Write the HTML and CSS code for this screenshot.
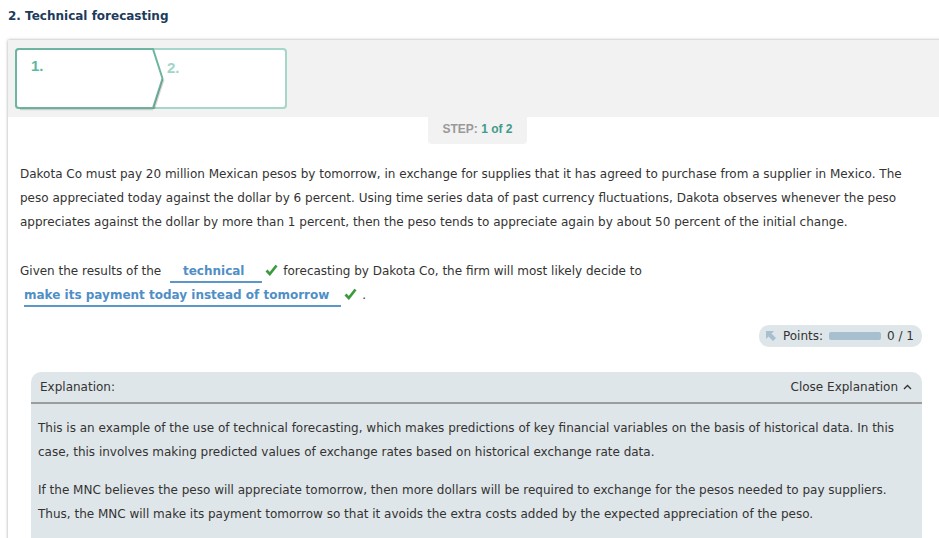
FILE: index.html
```html
<!DOCTYPE html>
<html>
<head>
<meta charset="utf-8">
<link rel="stylesheet" href="styles.css">
</head>
<body>
<h2 class="title">2. Technical forecasting</h2>
<div class="card">
  <div class="card-head">
    <div class="stepper">
      <div class="step step-2"><span class="step-num">2.</span></div>
      <div class="step step-1">
        <svg class="step-shape" width="152" height="64" viewBox="0 0 152 64">
          <path d="M4 1 H138 L147.5 30.5 L138 60 H4 Q1 60 1 57 V4 Q1 1 4 1 Z" fill="#fff" stroke="#6db4a1" stroke-width="2"/>
          <path d="M139 61 L148.5 31.5" stroke="rgba(0,0,0,0.18)" stroke-width="2" fill="none"/>
          <path d="M5 61.5 H138" stroke="rgba(0,0,0,0.15)" stroke-width="1.5"/>
        </svg>
        <span class="step-num">1.</span>
      </div>
    </div>
  </div>
  <div class="step-label"><span class="step-word">STEP:</span> <span class="step-count">1 of 2</span></div>
  <div class="content">
    <p class="text">Dakota Co must pay 20 million Mexican pesos by tomorrow, in exchange for supplies that it has agreed to purchase from a supplier in Mexico. The peso appreciated today against the dollar by 6 percent. Using time series data of past currency fluctuations, Dakota observes whenever the peso appreciates against the dollar by more than 1 percent, then the peso tends to appreciate again by about 50 percent of the initial change.</p>
    <p class="text text-answer">Given the results of the <span class="blank blank-1">technical</span><svg class="check" width="13" height="12" viewBox="0 0 13 12"><path d="M1.5 6.5 L4.8 10 L11.5 1.5" stroke="#3b9a3b" stroke-width="2.7" fill="none" stroke-linejoin="miter"/></svg> forecasting by Dakota Co, the firm will most likely decide to<br><span class="blank blank-2">make its payment today instead of tomorrow</span><svg class="check" width="13" height="12" viewBox="0 0 13 12"><path d="M1.5 6.5 L4.8 10 L11.5 1.5" stroke="#3b9a3b" stroke-width="2.7" fill="none" stroke-linejoin="miter"/></svg> .</p>
    <div class="points-row">
      <div class="points">
        <svg class="points-icon" width="12" height="12" viewBox="0 0 12 12"><path d="M1 1 H9 L6.5 3.5 L11 8 L8 11 L3.5 6.5 L1 9 Z" fill="#a8bfcf"/></svg>
        <span>Points:</span>
        <span class="points-bar"></span>
        <span>0 / 1</span>
      </div>
    </div>
    <div class="explain">
      <div class="explain-head">
        <span>Explanation:</span>
        <span class="explain-close">Close Explanation <svg width="9" height="6" viewBox="0 0 9 6"><path d="M1 5 L4.5 1.5 L8 5" stroke="#333" stroke-width="1.3" fill="none"/></svg></span>
      </div>
      <div class="explain-body">
        <p>This is an example of the use of technical forecasting, which makes predictions of key financial variables on the basis of historical data. In this case, this involves making predicted values of exchange rates based on historical exchange rate data.</p>
        <p>If the MNC believes the peso will appreciate tomorrow, then more dollars will be required to exchange for the pesos needed to pay suppliers. Thus, the MNC will make its payment tomorrow so that it avoids the extra costs added by the expected appreciation of the peso.</p>
      </div>
    </div>
  </div>
</div>
</body>
</html>
```

FILE: styles.css
```css
html, body {
  margin: 0;
  padding: 0;
  overflow: hidden;
  background: #fff;
}
body {
  padding: 8px 0 0 8px;
  font-family: "DejaVu Sans", Verdana, sans-serif;
  color: #333;
}
.title {
  margin: 0 0 15px 0;
  font-family: "DejaVu Sans", Verdana, sans-serif;
  font-size: 12px;
  line-height: 17px;
  font-weight: bold;
  color: #1d3b5b;
}
.card {
  margin-right: -8px;
  background: #fff;
  box-shadow: 0 0 3px rgba(0,0,0,0.35);
  height: 600px;
}
.card-head {
  background: #f2f2f2;
  height: 77px;
  padding: 8px 0 0 7px;
  box-sizing: border-box;
}
.stepper {
  position: relative;
  width: 272px;
  height: 61px;
}
.step-2 {
  width: 272px;
  height: 61px;
  box-sizing: border-box;
  border: 2px solid #a4d6c9;
  border-radius: 4px;
  background: #fff;
  padding: 8px 0 0 150px;
}
.step-1 {
  position: absolute;
  left: 0;
  top: 0;
  width: 152px;
  height: 64px;
}
.step-shape {
  position: absolute;
  left: 0;
  top: 0;
}
.step-1 .step-num {
  position: absolute;
  left: 16px;
  top: 10px;
  color: #5cb7a1;
}
.step-num {
  font-family: "Liberation Sans", Arial, sans-serif;
  font-weight: bold;
  font-size: 15px;
  line-height: 16px;
  color: #a0d6c8;
}
.step-label {
  width: 99px;
  height: 27px;
  margin: 0 auto;
  background: #f2f2f2;
  border-radius: 0 0 4px 4px;
  text-align: center;
  font-family: "Liberation Sans", Arial, sans-serif;
  font-size: 12px;
  font-weight: bold;
  line-height: 25px;
}
.step-word { color: #999; }
.step-count { color: #3f9b8c; }
.content {
  padding: 18px 25px 0 12px;
}
.text {
  margin: 0 0 25px 0;
  font-size: 12px;
  line-height: 24px;
  color: #333;
}
.text-answer {
  margin-bottom: 24px;
}
.blank {
  display: inline-block;
  border-bottom: 2px solid #5b98c9;
  line-height: 19px;
  color: #4f8fc6;
  font-weight: bold;
}
.blank-1 {
  padding: 0 18px 0 13px;
  margin-left: 5px;
}
.blank-2 {
  margin-left: 4px;
  padding: 0 12px 0 0;
}
.check {
  vertical-align: -1px;
  margin: 0 1px 0 3px;
}
.points-row {
  display: flex;
  justify-content: flex-end;
  margin-top: -6px;
}
.points {
  display: flex;
  align-items: center;
  gap: 6px;
  height: 22px;
  padding: 0 8px 0 6px;
  background: #dfe6e9;
  border-radius: 10px;
  font-size: 12px;
  color: #333;
}
.points-bar {
  width: 52px;
  height: 8px;
  border-radius: 2px;
  background: #a8bfcf;
}
.explain {
  margin: 25px 0 0 11px;
  background: #dfe6e9;
  border-radius: 10px;
  height: 200px;
}
.explain-head {
  display: flex;
  justify-content: space-between;
  align-items: center;
  height: 30px;
  padding: 0 10px 0 9px;
  border-bottom: 2px solid #9d9d9d;
  font-size: 12px;
  color: #333;
}
.explain-close {
  display: flex;
  align-items: center;
  gap: 5px;
}
.explain-body {
  padding: 12px 20px 0 7px;
}
.explain-body p {
  margin: 0 0 14px 0;
  font-size: 12px;
  line-height: 24px;
  color: #333;
}
```
